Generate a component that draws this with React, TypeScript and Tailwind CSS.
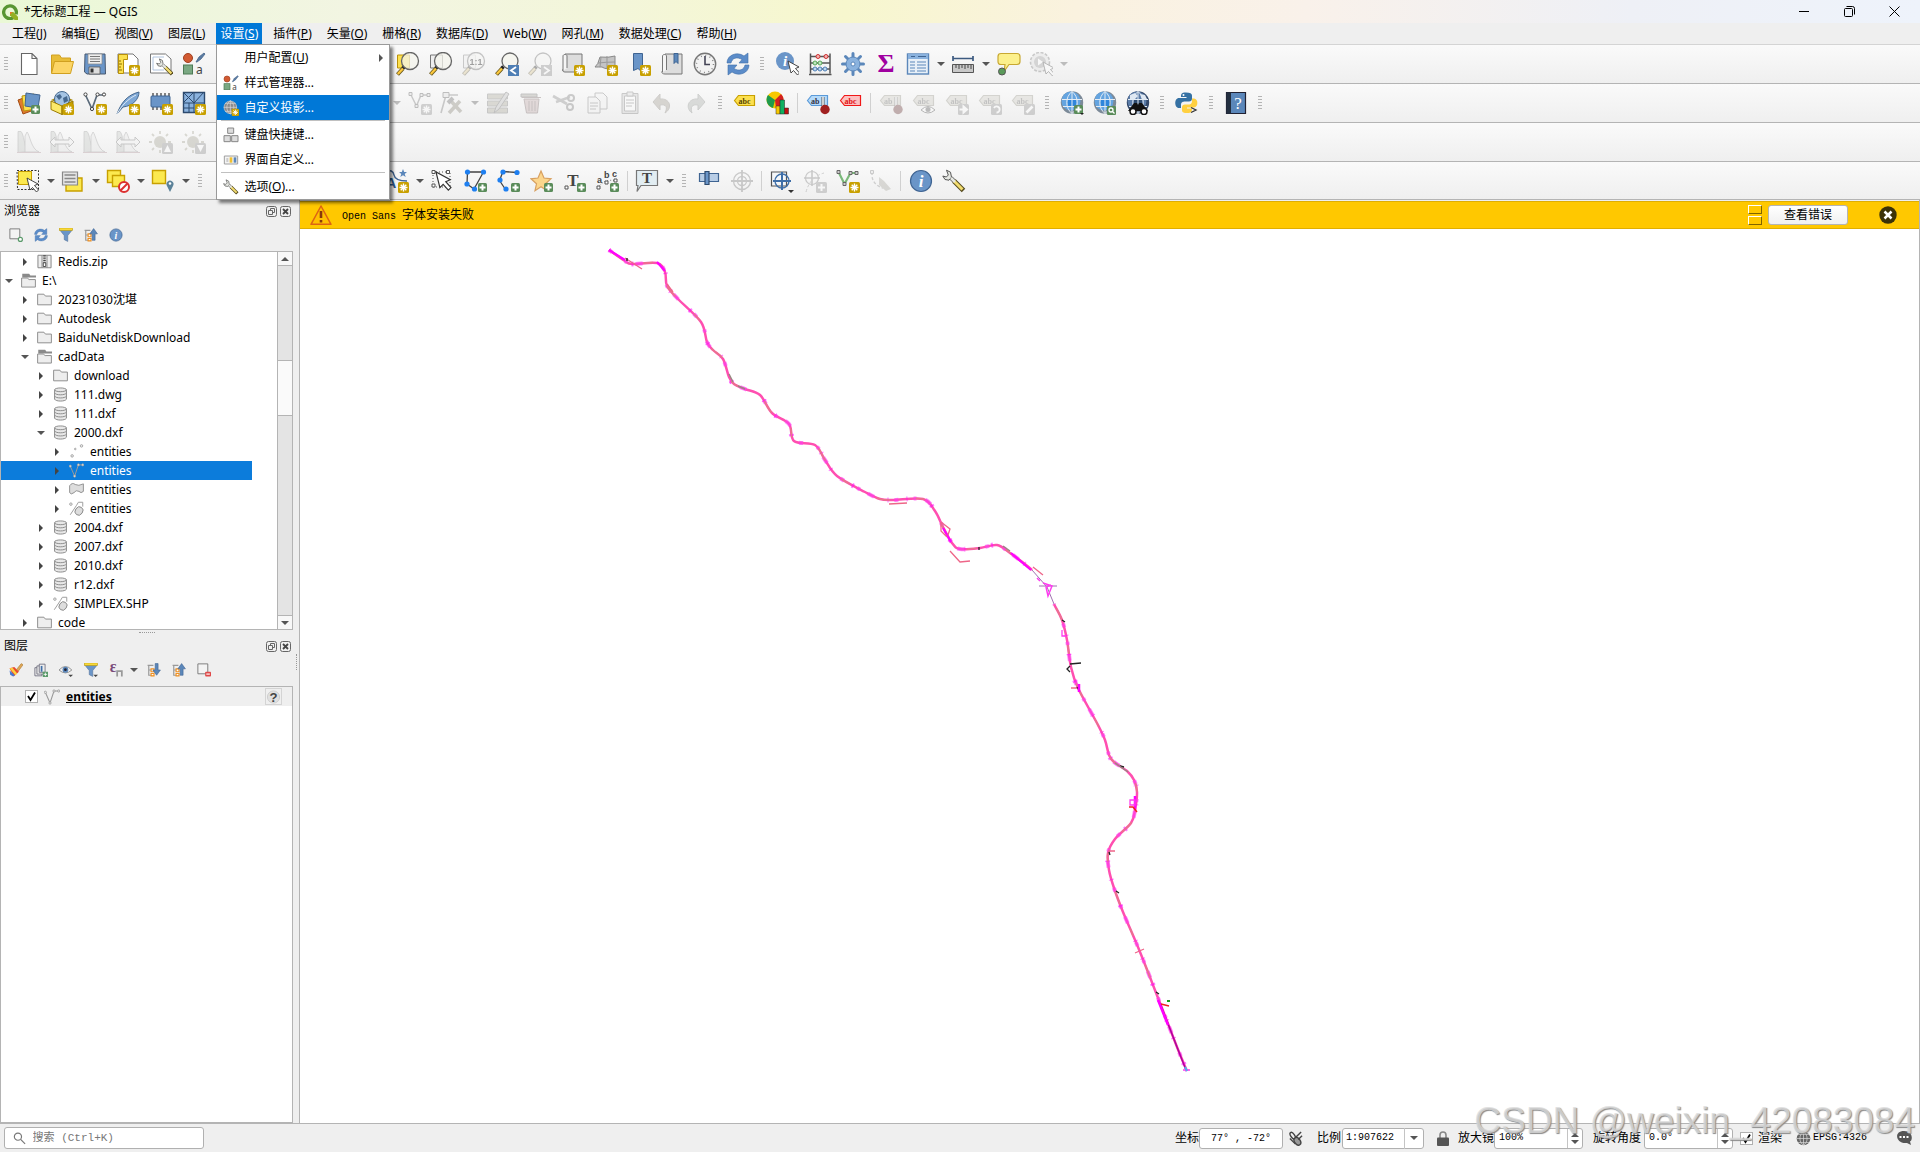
import { ReactNode, useState } from "react";

const PlusBadge = () => (
  <g>
    <rect x="14" y="14" width="9" height="9" rx="1.5" fill="#5a8c5a" />
    <path d="M18.5 15.5v6M15.5 18.5h6" stroke="#fff" strokeWidth="2" />
  </g>
);

const NewBadge = ({ gray = false }: { gray?: boolean }) => (
  <g>
    <rect x="13" y="13" width="11" height="11" rx="1.5" fill={gray ? "#8c8c8c" : "#c8a000"} />
    <path d="M18.5 14.5v8M14.5 18.5h8M15.7 15.7l5.6 5.6M21.3 15.7l-5.6 5.6" stroke="#fff" strokeWidth="1.4" />
  </g>
);

const GrayBadge = ({ children }: { children: ReactNode }) => (
  <g>
    <rect x="13" y="13" width="11" height="11" rx="1.5" fill="#8c8c8c" />
    {children}
  </g>
);

const Lens = ({ cx = 14, cy = 9, r = 8.5 }: { cx?: number; cy?: number; r?: number }) => (
  <g>
    <path d="M8.5 14.5l-2 2" stroke="#222" strokeWidth="3.5" />
    <path d="M7 16.5L1.5 22.5" stroke="#6b5a1e" strokeWidth="4" />
    <path d="M7 16.5L1.8 22" stroke="#fcc83c" strokeWidth="2.2" />
    <circle cx={cx} cy={cy} r={r} fill="#f4f4ec" fillOpacity=".75" stroke="#666" strokeWidth="1.3" />
  </g>
);

const Cursor = ({ x, y }: { x: number; y: number }) => (
  <path transform={`translate(${x} ${y})`} d="M0 0l3 12 2.5-2.5 4 4.5 2-2-4-4.5 3.5-1.5z" fill="#fff" stroke="#333" strokeWidth=".9" />
);

const Tag = ({ fill, stroke, text, label = "abc" }: { fill: string; stroke: string; text: string; label?: string }) => (
  <g>
    <path d="M1.5 9.5l4-5H21.5v10H5.5z" fill={fill} stroke={stroke} strokeWidth="1.2" />
    <text x={label === "ab" ? 5 : 5.5} y="12.5" fontSize="8" fontWeight="700" fontFamily="Liberation Serif, serif" fill={text}>{label}</text>
  </g>
);

const Pin = () => (
  <g>
    <path d="M17 6v9" stroke="#555" strokeWidth="3" />
    <path d="M17 6v9" stroke="#eee" strokeWidth="1.6" />
    <circle cx="19" cy="18.5" r="4.7" fill="#a02020" />
  </g>
);

const Globe = ({ dark = false }: { dark?: boolean }) => (
  <g>
    <circle cx="12" cy="11.5" r="11.2" fill={dark ? "#34496a" : "#7c8a98"} />
    <circle cx="11" cy="10" r="9.5" fill={dark ? "#5b7ca8" : "#64a4e0"} />
    <path d="M8 9h8v6H8z" fill={dark ? "#2d4a6e" : "#2f86dc"} />
    <path d="M12 .5v22M7 8.5h15M2 8.5h5M3 15.5h18M12 .5C5 6 5 17 12 22.5M12 .5c7 5.5 7 16.5 0 22" stroke="#e4ecf4" strokeWidth="1" fill="none" />
    {dark && <path d="M4 4l5-2 3 3-4 4-4-1zM14 3l5 1 2 4-5 1z" fill="#dfe8f2" />}
  </g>
);

const Histogram = ({ arrows = false }: { arrows?: boolean }) => (
  <g>
    <path d="M1 22.5V1.5h3c3 3 3 14 7 20z" fill="#c0c8c0" stroke="#888" strokeWidth=".8" />
    <path d="M8 22V6l2-4c3 3 4 17 12 20z" fill="#e6e6e6" stroke="#888" strokeWidth=".8" />
    <path d="M0 22.5h24" stroke="#cc8899" strokeWidth="1" />
    {arrows && <path d="M0 12l5-5v3h14V7l5 5-5 5v-3H5v3z" fill="#f2f2f2" stroke="#777" strokeWidth="1" />}
  </g>
);

const Sun = ({ up = false }: { up?: boolean }) => (
  <g>
    <circle cx="11" cy="12" r="6" fill="#a5a078" />
    <path d="M11 1v3M11 20v3M0 12h3M19 12h3M3 4l2 2M19 4l-2 2M3 20l2-2" stroke="#a5a078" strokeWidth="1.8" />
    <GrayBadge>
      <path d={up ? "M15 22h7l-3.5-7z" : "M15 15h7l-3.5 7z"} fill="#fff" />
    </GrayBadge>
  </g>
);

const StyleManager = () => (
  <g>
    <circle cx="6" cy="6" r="4.5" fill="#d25a32" stroke="#a04020" />
    <path d="M14 10l3-5 5-4 1 1-4 5-4 3z" fill="#5b7ca3" stroke="#45648a" strokeWidth=".8" />
    <rect x="1.5" y="13" width="9" height="9" fill="#7aa882" stroke="#4c7a55" />
    <text x="14" y="22" fontSize="12" fontFamily="Noto Sans, sans-serif" fill="#444">a</text>
  </g>
);

const Wrench = () => (
  <g>
    <path d="M9 9l4 4" stroke="#666" strokeWidth="4" />
    <path d="M12 12l9.5 9.5" stroke="#554a1e" strokeWidth="5" />
    <path d="M12 12l8.5 8.5" stroke="#f2dc6e" strokeWidth="3" />
    <path d="M4.5 1.2l4 2 1 5-2.5 3-4-.7L.8 7l3.5 1 2-2z" fill="#e6e8e2" stroke="#555" strokeWidth="1" />
    <path d="M9 9l4 4" stroke="#e6e8e2" strokeWidth="2.5" />
  </g>
);

const FilterShape = () => (
  <g>
    <path d="M1 3h22l-8 10v10l-6-3v-7z" fill="#6a95c8" stroke="#56749a" />
    <rect x="1" y="0" width="22" height="4" fill="#f7d93c" stroke="#c8a000" />
  </g>
);

const TreeArrow = ({ down = false }: { down?: boolean }) => (
  <g>
    <path d="M1 4h10M3 4v17h9M3 12h5" stroke="#999" strokeWidth="2" fill="none" />
    <path d="M7 10h5v5H7zM7 18h5v4H7z" fill="#fff" stroke="#f09020" strokeWidth="2" />
    <path d={down ? "M14 1h5v11h4l-6.5 9L10 12h4z" : "M14 21h5V10h4l-6.5-9L10 10h4z"} fill="#5b87ba" stroke="#3f6492" />
  </g>
);

const icons: Record<string, ReactNode> = {
  newProject: <path d="M4.5 1.5h10.5l5 5v16h-15.5zM15 1.5v5h5" fill="#fff" stroke="#666" strokeWidth="1.1" />,
  open: (
    <g stroke="#d0a020" strokeWidth="1">
      <path d="M1.5 21V3h8l2 3h9v4" fill="#e8bd38" />
      <path d="M1.5 21.5l3-12h19l-3 12z" fill="#fcd566" />
    </g>
  ),
  save: (
    <g>
      <path d="M2 2h20l.5 20H4l-2.5-2z" fill="#6a95c8" stroke="#4a5a70" />
      <path d="M5 2h14v10H5z" fill="#eee" stroke="#888" strokeWidth=".7" />
      <path d="M7 4.5h10M7 7h10M7 9.5h10" stroke="#777" />
      <path d="M6 15h11v7H6z" fill="#ddd" stroke="#555" strokeWidth=".8" />
      <path d="M7.5 16.5h3v4h-3z" fill="#333" />
    </g>
  ),
  newLayout: (
    <g>
      <path d="M2 2h15l5 5v14H2z" fill="#fff" stroke="#777" />
      <path d="M2.5 2.5h9v5h-4v14h-5z" fill="#fbe04e" stroke="#b8900a" />
      <path d="M3 9h2M3 12h3M3 15h2M3 18h3" stroke="#8a6d00" />
      <NewBadge />
    </g>
  ),
  layoutManager: (
    <g>
      <path d="M1.5 2h15l5.5 5v14H1.5z" fill="#fff" stroke="#777" />
      <path d="M4 5h11M4 5v13h11" stroke="#b0c4de" fill="none" />
      <g transform="translate(7 6) scale(.75)"><Wrench /></g>
    </g>
  ),
  styleManager: <StyleManager />,
  addSource: (
    <g>
      <path d="M1 9l11-4 5 14-11 4z" fill="#e07a30" stroke="#a04a10" />
      <path d="M5 5l12-2 2 15-12 2z" fill="#fce04e" stroke="#b8900a" />
      <path d="M9 2l14 2-2 13-13-2z" fill="#6a95c8" stroke="#3f6492" />
      <PlusBadge />
    </g>
  ),
  geopackage: (
    <g>
      <path d="M1 9l11-5 11 5-11 5z" fill="#a88a10" />
      <circle cx="12" cy="8" r="7.5" fill="#a5c4e4" stroke="#46688e" />
      <path d="M6 5l4-2 2 3-3 3zM13 7l4-2 1 5-4 2z" fill="#46688e" />
      <path d="M1 10l11 5v8.5L1 18.5z" fill="#fce96a" stroke="#9a7a00" />
      <path d="M23 10l-11 5v8.5l11-5z" fill="#c8a000" stroke="#9a7a00" />
      <NewBadge />
    </g>
  ),
  newShapefile: (
    <g>
      <path d="M2.5 4l6.5 14L14 4h7" fill="none" stroke="#5a6a7a" strokeWidth="1.7" />
      <g fill="#fff" stroke="#444"><circle cx="2.5" cy="3.5" r="1.6" /><circle cx="9" cy="18" r="1.6" /><circle cx="14.5" cy="3.5" r="1.6" /><circle cx="21" cy="3.5" r="1.6" /></g>
      <NewBadge />
    </g>
  ),
  spatialite: (
    <g>
      <path d="M1 23C5 12 11 4 23 1c0 7-6 14-16 15z" fill="#7fa8d6" stroke="#46688e" />
      <path d="M1 23C6 14 12 8 20 4" stroke="#dfeaf5" fill="none" />
      <NewBadge />
    </g>
  ),
  tempLayer: (
    <g>
      <path d="M4 2v17M8 2v17M12 2v17M16 2v17M20 2v17" stroke="#444" strokeWidth="1.3" />
      <rect x="2" y="5" width="19" height="11" rx="1" fill="#6a95c8" stroke="#3f6492" />
      <NewBadge />
    </g>
  ),
  meshLayer: (
    <g>
      <path d="M1.5 1.5h21v20h-21z" fill="#8ab2de" stroke="#2d4a6e" strokeWidth="1.4" />
      <path d="M12 1v21M1 12h21M1 1l11 11M12 1L1 12M22 1L12 12M7 12v10M12 17H1" stroke="#2d4a6e" strokeWidth="1" />
      <NewBadge />
    </g>
  ),
  histogram: <Histogram />,
  histogramStretch: <Histogram arrows />,
  sunUp: <Sun up />,
  sunDown: <Sun />,
  zoomSelection: <g><path d="M1.5 3h12v13h-12z" fill="#fce04e" stroke="#b8900a" /><Lens /></g>,
  zoomLayer: <g><path d="M1.5 3h12v13h-12z" fill="#eee" stroke="#777" /><Lens /></g>,
  zoomNative: (
    <g>
      <path d="M1.5 3h12v13h-12z" fill="#eee" stroke="#777" /><Lens />
      <text x="14" y="12.5" textAnchor="middle" fontSize="9" fontWeight="700" fontFamily="Liberation Sans, sans-serif">1:1</text>
    </g>
  ),
  zoomLast: <g><Lens cx={15} cy={9} r={8} /><rect x="13" y="13" width="11" height="11" fill="#4f7fb5" /><path d="M21 15l-5 3.5 5 3.5" stroke="#fff" strokeWidth="1.8" fill="none" /></g>,
  zoomNext: <g><Lens cx={15} cy={9} r={8} /><rect x="13" y="13" width="11" height="11" fill="#888" /><path d="M16 15l5 3.5-5 3.5" stroke="#fff" strokeWidth="1.8" fill="none" /></g>,
  newMap: <g><path d="M4 2h17v18H4c-3 0-3-3-1-3.5z" fill="#ddd" stroke="#777" /><path d="M2 19V4c0-2 4-2 4 0v12" fill="#f5f5f5" stroke="#777" /><NewBadge /></g>,
  new3d: <g><path d="M1 15q3-2 5-10 8 1 15-1v12q-9 2-13-1-4 0-7 0z" fill="#c4c4c4" stroke="#888" /><path d="M4 11q9-1 17-1M13 4v12M7 5l-1 10" stroke="#999" fill="none" /><NewBadge /></g>,
  newBookmark: <g><path d="M6.5 1.5h9v19l-4.5-4-4.5 2z" fill="#6a95c8" stroke="#3f6492" /><NewBadge /></g>,
  bookmarks: <g><path d="M5 2h17v20H5c-4 0-4-3-1-4z" fill="#ddd" stroke="#777" /><path d="M2.5 20V4c0-2 4-2 4 0v14" fill="#f5f5f5" stroke="#777" /><path d="M14 1.5h4v10l-2-2-2 2z" fill="#5b87ba" stroke="#3f6492" /></g>,
  clock: <g><circle cx="12" cy="12" r="10.7" fill="#f2f2f2" stroke="#777" strokeWidth="1.4" /><circle cx="12" cy="12" r="8.5" fill="none" stroke="#888" strokeDasharray="1 3.45" strokeWidth="1.5" /><path d="M12 4v8.5h5" stroke="#445" strokeWidth="1.6" fill="none" /></g>,
  refresh: (
    <g fill="#5b8cc9" stroke="#3f6ea8" strokeWidth=".6">
      <path d="M1 11C1 3 11-1 18 4l4-3v10h-9l3-3.5C11 4.5 6 6 5 11z" />
      <path d="M23 13c0 8-10 12-17 7l-4 3V13h9l-3 3.5c5 3 10 1.5 11-3.5z" />
    </g>
  ),
  identify: <g><circle cx="10" cy="9" r="9" fill="#6a95c8" /><text x="10" y="14" textAnchor="middle" fontSize="15" fontStyle="italic" fontWeight="700" fontFamily="Liberation Serif, serif" fill="#fff">i</text><Cursor x={13} y={9} /></g>,
  abacus: (
    <g>
      <path d="M2.5 1.5v20M22 1.5v20M1 22.5h22.5M2 4.5h20M2 11h20M2 17h20" stroke="#555" strokeWidth="1.5" fill="none" />
      <g fill="#f6b0b0" stroke="#cc3030"><circle cx="10" cy="4.5" r="2" /><circle cx="18" cy="4.5" r="2" /></g>
      <g fill="#bfe6bf" stroke="#5aa85a"><circle cx="7" cy="11" r="2" /><circle cx="12" cy="11" r="2" /></g>
      <g fill="#bcd6f0" stroke="#4f7fb5"><circle cx="7" cy="17" r="2" /><circle cx="12" cy="17" r="2" /><circle cx="17" cy="17" r="2" /></g>
    </g>
  ),
  gear: (
    <g>
      <path d="M12 1.5v21M1.5 12h21M4.5 4.5l15 15M19.5 4.5l-15 15" stroke="#5b87ba" strokeWidth="3" strokeLinecap="round" />
      <circle cx="12" cy="12" r="7" fill="#8ab2de" stroke="#5b87ba" /><circle cx="12" cy="12" r="2" fill="#fff" stroke="#5b87ba" />
    </g>
  ),
  sigma: <text x="12" y="20" textAnchor="middle" fontSize="26" fontWeight="700" fontFamily="Liberation Serif, serif" fill="#a000a0">Σ</text>,
  table: <g><rect x="1.5" y="2" width="21" height="20" fill="#e8f0f8" stroke="#5b87ba" strokeWidth="1.4" /><path d="M2 2h20v5H2z" fill="#8ab2de" /><path d="M5 4.5h4M12 4.5h8" stroke="#3f6492" /><path d="M4 10h5M11 10h9M4 13h5M11 13h9M4 16h5M11 16h9M4 19h5M11 19h9" stroke="#5b87ba" /></g>,
  measure: <g><path d="M2 6.5h20M2 4v5M22 4v5" stroke="#3c5a80" strokeWidth="1.7" /><path d="M1.5 12.5h21v8h-21z" fill="#c8c8c8" stroke="#555" /><path d="M5 13v3M8 13v4M11 13v3M14 13v4M17 13v3M20 13v4" stroke="#444" /></g>,
  mapTips: <g><path d="M4 1.5h16q3 0 3 3v5q0 3-3 3h-8l-5 7 1-7H4q-3 0-3-3v-5q0-3 3-3z" fill="#fcf08c" stroke="#c8a832" strokeWidth="1.2" /><circle cx="5" cy="19.5" r="3.5" fill="#5a9a5a" stroke="#555" /></g>,
  action: <g><circle cx="11" cy="10" r="9.5" fill="#ddd" stroke="#777" strokeDasharray="3 1.5" strokeWidth="1.6" /><circle cx="11" cy="10" r="6" fill="#999" /><path d="M9 6.5l5 3.5-5 3.5z" fill="#fff" /><Cursor x={14} y={10} /></g>,
  addFeature: <g><path d="M2.5 3l6 12L13 4h8" fill="none" stroke="#777" strokeWidth="1.5" /><g fill="#ddd" stroke="#555"><path d="M1 1.5h3v3H1zM7 13.5h3v3H7zM12 2.5h3v3h-3zM19 2.5h3v3h-3z" /></g><NewBadge gray /></g>,
  vertexTool: <g><path d="M1 22L6 4h12" fill="none" stroke="#777" strokeWidth="1.6" /><path d="M3 1.5h6v5H3z" fill="#ddd" stroke="#555" /><path d="M20 10L9 22M10 9l11 12" stroke="#8a8460" strokeWidth="3.5" /><path d="M8 12l5-5" stroke="#666" strokeWidth="4" /></g>,
  modify: <g><path d="M1.5 3h20v5h-20zM1.5 10h20v5h-20zM1.5 17h20v5h-20z" fill="#b0a880" stroke="#777" /><path d="M8 22l2-6L20 1l3 2-10 15z" fill="#bbb" stroke="#666" /></g>,
  trash: <g><path d="M2 3h16v3H2z" fill="#aaa08c" stroke="#666" /><path d="M5 8h15l-1.5 14h-11z" fill="#d8a0a0" stroke="#8a6060" /><path d="M10 10v10M13 10v10M16 10v10M3 6.5h19" stroke="#8a6060" /></g>,
  cut: <g><path d="M1 5l14 8M4 11l14-5" stroke="#888" strokeWidth="2.6" /><circle cx="19" cy="7" r="3" fill="none" stroke="#777" strokeWidth="2" /><circle cx="18" cy="16" r="3" fill="none" stroke="#777" strokeWidth="2" /></g>,
  copy: <g fill="#f2f2f2" stroke="#777"><path d="M10 2h8l4 4v12H10z" /><path d="M3 6h8l4 4v12H3z" /><path d="M5 12h8M5 15h8M5 18h6" /></g>,
  paste: <g stroke="#777"><path d="M4 2.5h16v20H4z" fill="#ccc" /><path d="M6.5 5h11v15h-11z" fill="#fff" /><path d="M9 1h6v4H9z" fill="#ddd" /><path d="M8 9h8M8 12h8M8 15h6" /></g>,
  undo: <path d="M9 3v5c10-1 13 9 5 14 3-6 1-9-5-8v5L2 11z" fill="#a8987c" stroke="#8a8070" />,
  redo: <path d="M14 3v5C4 7 1 17 8 22c-2-6 0-9 6-8v5l7-8z" fill="#a4aca4" stroke="#808a80" />,
  tagYellow: <Tag fill="#fce04e" stroke="#c8a000" text="#554400" />,
  diagram: (
    <g>
      <circle cx="9" cy="9" r="8.5" fill="#f7c800" />
      <path d="M9 9L2 4a8.5 8.5 0 0 0 5 13z" fill="#1f9a4c" /><path d="M9 9l6-6a8.5 8.5 0 0 1-5 14.5z" fill="#d42020" />
      <path d="M10 15h4v8h-4z" fill="#f7c800" stroke="#333" strokeWidth=".5" /><path d="M14 9h4.5v14H14z" fill="#10b060" stroke="#222" strokeWidth=".5" /><path d="M18.5 17h4v6h-4z" fill="#c01010" stroke="#222" strokeWidth=".5" />
    </g>
  ),
  tagPin: <g><Tag fill="#b4dafa" stroke="#5b9ad8" text="#334" label="ab" /><Pin /></g>,
  tagRed: <Tag fill="#fcc0c0" stroke="#f01818" text="#e01010" />,
  tagPinGray: <g><Tag fill="#cfcbb0" stroke="#999478" text="#666" label="ab" /><Pin /></g>,
  tagEye: <g><Tag fill="#cfcbb0" stroke="#999478" text="#666" /><path d="M9 19q7-7 14 0-7 6-14 0z" fill="#fff" stroke="#444" /><circle cx="16" cy="18.5" r="2.5" fill="#555" /></g>,
  tagMove: <g><Tag fill="#cfcbb0" stroke="#999478" text="#666" /><GrayBadge><path d="M14.5 18.5h4M18.5 15.5l3.5 3-3.5 3z" stroke="#fff" strokeWidth="2" fill="#fff" /></GrayBadge></g>,
  tagRotate: <g><Tag fill="#cfcbb0" stroke="#999478" text="#666" /><GrayBadge><path d="M16 17a3 3 0 1 1 2.5 4.5" stroke="#fff" strokeWidth="1.8" fill="none" /></GrayBadge></g>,
  tagEdit: <g><Tag fill="#cfcbb0" stroke="#999478" text="#666" /><GrayBadge><path d="M15.5 21.5l6-6" stroke="#fff" strokeWidth="2.6" /></GrayBadge></g>,
  globeAdd: <g><Globe /><PlusBadge /><path d="M20 22h4l-2 2z" fill="#222" /></g>,
  globeSearch: <g><Globe /><rect x="14" y="15" width="9" height="9" rx="1" fill="#5a8c5a" /><circle cx="18" cy="19" r="2" fill="none" stroke="#fff" strokeWidth="1.3" /><path d="M19.5 20.5l2 2" stroke="#fff" strokeWidth="1.3" /></g>,
  globeFind: <g><Globe dark /><path d="M8 12h3l1 2 1-2h3l6 8H2z" fill="#111" /><circle cx="7" cy="20.5" r="3" fill="#fff" stroke="#111" strokeWidth="1.5" /><circle cx="18" cy="20.5" r="3" fill="#fff" stroke="#111" strokeWidth="1.5" /></g>,
  python: (
    <g>
      <path d="M11 1.5c-5 0-5 2-5 4.5h5.5v1H4c-5 0-5 10 0 10h2v-3c0-3 2-3.5 4-3.5h4c2 0 3-1 3-3V4.5c0-2-2-3-6-3z" fill="#3571a3" />
      <path d="M12 22c5 0 5-2 5-4.5h-5v-1h7c4.5 0 4.5-9 0-9h-2v2.5c0 3-2 3.5-4 3.5h-3c-2 0-3 1-3 3v3c0 2 2 2.5 5 2.5z" fill="#ffd040" />
      <circle cx="8.5" cy="4" r="1" fill="#fff" /><path d="M16 16.5l5 2.5-5 2.5" stroke="#333" strokeWidth="1.3" fill="none" />
    </g>
  ),
  help: <g><path d="M2.5 1.5h19v21h-19z" fill="#5b87ba" stroke="#223" strokeWidth="1.2" /><path d="M2.5 1.5h4.5v21H2.5z" fill="#232f40" /><text x="14" y="18" textAnchor="middle" fontSize="17" fontFamily="Liberation Serif, serif" fill="#fff">?</text></g>,
  select: <g><path d="M2.5 2.5h13v13h-13z" fill="#fce94f" stroke="#c8a000" /><path d="M1 1.5h21.5v19H1.5z" fill="none" stroke="#333" strokeDasharray="2 1.5" /><Cursor x={11} y={9} /></g>,
  selectValue: <g><path d="M5 9h16v13H5z" fill="#fce94f" stroke="#c8a000" strokeWidth="1.4" /><path d="M1.5 3h15v13h-15z" fill="#e4e4e4" stroke="#888" strokeWidth="1.2" /><path d="M3.5 6h11M3.5 9.5h11M3.5 13h11" stroke="#888" strokeWidth="1.5" /></g>,
  deselect: <g><path d="M1.5 1.5h13v12h-13z" fill="#fce94f" stroke="#c8a000" strokeWidth="1.4" /><path d="M6.5 6.5h12v11h-12z" fill="#fce94f" stroke="#c8a000" strokeWidth="1.4" /><circle cx="18" cy="18" r="5" fill="#fff" stroke="#dc3030" strokeWidth="2" /><path d="M14.5 21.5l7-7" stroke="#dc3030" strokeWidth="2" /></g>,
  selectLocation: <g><path d="M1.5 1.5h13v13h-13z" fill="#fce94f" stroke="#c8a000" strokeWidth="1.4" /><path d="M19 23l-3-6a3.5 3.5 0 1 1 6 0z" fill="#5b8299" /><circle cx="19" cy="14.5" r="1.3" fill="#fff" /></g>,
  textLine: <g><path d="M0 2q8-2 9 4t13 6" stroke="#3f6492" fill="none" strokeWidth="1.5" /><text x="6" y="19" textAnchor="middle" fontSize="15" fontWeight="700" fontFamily="Liberation Sans, sans-serif" fill="#2d5a8e">A</text><path d="M18 0l1.2 3H22l-2.3 2 1 3-2.7-1.8L15.3 8l1-3L14 3h2.8z" fill="#5b87ba" /><NewBadge /></g>,
  annotSelect: <g><path d="M2 3h17M2 3v15h17V3" fill="none" stroke="#555" strokeDasharray="1 2" /><path d="M1 1.5h3v3H1zM15.5 1.5h3v3h-3zM1 15h3v3H1z" fill="#fff" stroke="#555" /><g transform="translate(5 3) scale(1.3)"><Cursor x={0} y={0} /></g></g>,
  annotPolygon: <g><path d="M3.5 3h16L10 20l-7-5z" fill="none" stroke="#444" strokeWidth="1.3" /><g fill="#1e7ff0"><circle cx="3.5" cy="3" r="2.6" /><circle cx="19.5" cy="3" r="2.6" /><circle cx="3" cy="15" r="2.6" /><circle cx="10.5" cy="20" r="2.6" /></g><PlusBadge /></g>,
  annotLine: <g><path d="M20 3.5L6 2.5l-3.5 9 6 9" fill="none" stroke="#444" strokeWidth="1.3" /><g fill="#1e7ff0"><circle cx="6" cy="3" r="2.6" /><circle cx="20" cy="3.5" r="2.6" /><circle cx="3" cy="11" r="2.6" /><circle cx="9" cy="20" r="2.6" /></g><PlusBadge /></g>,
  annotMarker: <g><path d="M11 2l3 7 7 .8-5.5 5 1.5 7-6-4-6 4 1.5-7L1 9.8 8 9z" fill="#fcd68c" stroke="#d8a060" strokeWidth="1.2" /><PlusBadge /></g>,
  annotText: <g><text x="10" y="17" textAnchor="middle" fontSize="17" fontWeight="700" fontFamily="Liberation Serif, serif" fill="#444">T</text><path d="M2 17h3v3H2z" fill="#fff" stroke="#555" /><PlusBadge /></g>,
  annotTextLine: (
    <g>
      <g fontSize="9" fontWeight="700" fontFamily="Liberation Sans, sans-serif" fill="#444"><text x="1" y="14">a</text><text x="8" y="9">b</text><text x="16" y="8">c</text></g>
      <path d="M2 19Q8 9 20 12" stroke="#666" strokeDasharray="1 2" fill="none" /><path d="M1 17h3v3H1zM9 12h3v3H9zM18 10h3v3h-3z" fill="#fff" stroke="#555" /><PlusBadge />
    </g>
  ),
  textBox: <g><path d="M1.5 1.5h21v15H6l-4 6 1-6H1.5z" fill="#e2edf2" stroke="#777" strokeWidth="1.2" /><text x="12" y="14" textAnchor="middle" fontSize="15" fontWeight="700" fontFamily="Liberation Serif, serif" fill="#444">T</text></g>,
  snap: <g><path d="M2.5 4.5h19v8h-19z" fill="#b8cde6" stroke="#3f6492" strokeWidth="1.2" /><path d="M8 2.5h4v13H8z" fill="#6a95c8" stroke="#2d4a6e" strokeWidth="1.2" /></g>,
  target: <g fill="none" stroke="#777" strokeWidth="1.3"><circle cx="12" cy="12" r="8.5" /><circle cx="12" cy="12" r="4.5" /><path d="M12 1v22M1 12h22" strokeWidth="1.8" /></g>,
  targetBox: <g><path d="M1.5 3h15v14h-15z" fill="#f4f6f8" stroke="#555" strokeWidth="1.2" /><circle cx="12" cy="12" r="7" fill="none" stroke="#3f6fa8" strokeWidth="1.3" /><path d="M12 3v18M3 12h18" stroke="#3f6fa8" strokeWidth="2" /><path d="M18 21h6l-3 3z" fill="#333" /></g>,
  targetAdd: <g><g fill="none" stroke="#777" strokeWidth="1.2"><circle cx="9" cy="9" r="6.5" /><path d="M9 1v16M1 9h16" strokeWidth="1.6" /></g><path d="M3 23Q7 8 21 4" stroke="#888" fill="none" strokeDasharray="3 2" /><GrayBadge><path d="M18.5 15v7M15 18.5h7" stroke="#fff" strokeWidth="2" /></GrayBadge></g>,
  vectorNew: <g><path d="M2.5 3l6 12 6-11h7" fill="none" stroke="#7ab87a" strokeWidth="2.2" /><g fill="#ccc" stroke="#666"><path d="M1 1.5h3v3H1zM7 13.5h3v3H7zM13 2.5h3v3h-3zM19 2.5h3v3h-3z" /></g><NewBadge /></g>,
  traceOff: <g><path d="M3 3v4q1 9 11 12" stroke="#888" strokeWidth="1.4" strokeDasharray="3 2" fill="none" /><path d="M1.5 1.5h3v3h-3z" fill="#ddd" stroke="#777" /><path d="M10 8l5 4 7 8-5 2-7-6z" fill="#a8a48c" /></g>,
  info: (
    <g>
      <circle cx="12" cy="12" r="10.5" fill="#6a95c8" stroke="#3f6492" strokeWidth="1.2" />
      <text x="12" y="18" textAnchor="middle" fontSize="17" fontStyle="italic" fontWeight="700" fontFamily="Liberation Serif, serif" fill="#fff">i</text>
    </g>
  ),
  wrench: <Wrench />,
  filter: <FilterShape />,
  addLayerSmall: <g><path d="M1.5 1.5h17v17h-17z" fill="#f4f4f4" stroke="#777" strokeWidth="1.6" /><circle cx="19.5" cy="19.5" r="3.5" fill="#fff" stroke="#5a9a6a" strokeWidth="2" /></g>,
  removeLayer: <g><path d="M1.5 1.5h17v17h-17z" fill="#f4f4f4" stroke="#777" strokeWidth="1.6" /><rect x="14" y="15" width="10" height="8" rx="1.5" fill="#e04848" /><path d="M16 19h6" stroke="#fff" strokeWidth="2" /></g>,
  collapse: <TreeArrow />,
  expand: <TreeArrow down />,
  brush: <g><path d="M13 11l8-10 3 2-8 11z" fill="#e0a858" stroke="#a87830" /><path d="M1 9l8-2 8 8-9 8z" fill="#e84830" /><path d="M1 9l5-1 8 10-3 3z" fill="#fcd040" /><path d="M1 13l9 8-3 2-5-3z" fill="#4878d0" /></g>,
  groupAdd: <g fill="#eee" stroke="#667" strokeWidth="1.4"><path d="M1.5 8h12v14h-12z" /><path d="M5 5h12v14H5z" /><path d="M9 2h10v14H9z" /><path d="M13 5v10" stroke="#3f6fa8" strokeWidth="3" /><rect x="15" y="15" width="9" height="9" fill="#5a9a6a" stroke="none" /><path d="M19.5 16.5v6M16.5 19.5h6" stroke="#fff" /></g>,
  eye: <g><path d="M0 12Q11 0 22 12 11 22 0 12z" fill="#f4f4f4" stroke="#888" strokeWidth="1.5" /><circle cx="11" cy="11.5" r="5" fill="#5b87ba" /><circle cx="11" cy="11.5" r="2.3" fill="#223" /><path d="M16 20h8l-4 4z" fill="#444" /></g>,
  filterMenu: <g><FilterShape /><path d="M16 20h8l-4 4z" fill="#444" /></g>,
  epsilon: <g><text x="7" y="15" textAnchor="middle" fontSize="27" fontWeight="700" fontFamily="Liberation Serif, serif" fill="#7a4a7a">ε</text><path d="M14 23v-9h8v9" stroke="#999" strokeWidth="3" fill="none" /></g>,
  globeNew: <g><circle cx="11" cy="11" r="9.5" fill="#8a8a8a" stroke="#ccc" /><path d="M11 1v20M1 11h20M3 5h16M3 17h16M11 1C4 6 4 16 11 21M11 1c7 5 7 15 0 20" stroke="#ddd" fill="none" /><NewBadge /></g>,
  keys: <g fill="#ddd" stroke="#888" strokeWidth="1.5"><path d="M7 1.5h9v8H7zM1.5 13h9.5v9H1.5zM13 13h9.5v9H13z" /></g>,
  customize: <g><path d="M2 6h20v12H2z" fill="#f4f4f4" stroke="#999" strokeWidth="1.4" /><path d="M5 9h3v6H5z" fill="#ccc" /><path d="M10 8h4v8h-4z" fill="#f0c030" /><path d="M16 8h4v8h-4z" fill="#5b87ba" /></g>,
  zip: <g><path d="M1.5 2h21v20h-21z" fill="#eee" stroke="#888" strokeWidth="1.6" /><path d="M8 2v20M16 2v20" stroke="#888" strokeWidth="1.5" /><path d="M12 2v12" stroke="#444" strokeWidth="4" strokeDasharray="2 1.5" /><path d="M10 14h4v6h-4z" fill="#fff" stroke="#444" strokeWidth="1.5" /></g>,
  folder: <path d="M1 20.5V3.5h10l2.5 3H23v14z" fill="#eee" stroke="#8a8a8a" strokeWidth="1.5" />,
  folderOpen: <g><path d="M2 1h11l2 3h9v3H2z" fill="#8a8a8a" /><path d="M1 22.5V8h9l3 2.5h10v12z" fill="#eee" stroke="#8a8a8a" strokeWidth="1.5" /></g>,
  database: <g fill="#e8e8e8" stroke="#888" strokeWidth="1.5"><path d="M2.5 4.5v15c2 4 17 4 19 0v-15" /><ellipse cx="12" cy="4.5" rx="9.5" ry="3" /><path d="M2.5 9.5c2 4 17 4 19 0M2.5 14.5c2 4 17 4 19 0" fill="none" /></g>,
  points: <g fill="#eee" stroke="#999" strokeWidth="1.3"><circle cx="5" cy="19" r="2" /><circle cx="20" cy="3" r="2" /><circle cx="10" cy="8" r="1.3" /></g>,
  lines: <g><path d="M2 5l7 16 6-18h8" fill="none" stroke="#999" strokeWidth="1.6" /><g fill="#eee" stroke="#999" strokeWidth="1.2"><circle cx="2" cy="5" r="1.7" /><circle cx="9" cy="21" r="1.7" /><circle cx="15" cy="3" r="1.7" /><circle cx="22" cy="3" r="1.7" /></g></g>,
  polygon: <path d="M1 6q4-6 9-2 5 3 13-1v12q-4 4-7 0-5-3-8 2-5 4-7 0z" fill="#ddd" stroke="#888" strokeWidth="1.4" />,
  mixed: <g><path d="M2 22L12 7l3-5h7v7" stroke="#999" fill="none" strokeWidth="1.5" /><circle cx="3" cy="5" r="2" fill="#eee" stroke="#999" strokeWidth="1.3" /><ellipse cx="16" cy="16" rx="6" ry="7" transform="rotate(35 16 16)" fill="#ddd" stroke="#888" strokeWidth="1.4" /></g>,
};

function Icon({ name, className = "size-6" }: { name: string; className?: string }) {
  return (
    <svg viewBox="0 0 24 24" className={`${className} shrink-0`} aria-hidden="true">
      {icons[name]}
    </svg>
  );
}

function Caret({ className = "" }: { className?: string }) {
  return <span className={`h-0 w-0 border-x-4 border-t-4 border-x-transparent border-t-[#555] ${className}`} />;
}

type Tool = { icon: string; label: string; menu?: boolean; off?: boolean };

function ToolButton({ icon, label, menu, off }: Tool) {
  return (
    <button
      aria-label={label}
      className={`flex h-8 items-center ${menu ? "w-[45px] pl-1" : "w-[33px] justify-center"} ${off ? "opacity-35 grayscale-[60%]" : ""}`}
    >
      <Icon name={icon} />
      {menu && <Caret className="ml-[7px]" />}
    </button>
  );
}

const Tools = ({ items }: { items: Tool[] }) => items.map((item) => <ToolButton key={item.label} {...item} />);

function Handle({ className = "w-4" }: { className?: string }) {
  return (
    <span className={`flex h-4 justify-center ${className}`}>
      <span className="w-1 bg-[radial-gradient(circle,#b4b4b4_1px,transparent_1px)] bg-[length:2px_3px]" />
    </span>
  );
}

const Separator = () => <span className="mx-[3px] h-5 w-px bg-[#d0d0d0]" />;

function Toolbar({ label, children, className = "h-[39px]" }: { label: string; children: ReactNode; className?: string }) {
  return (
    <div role="toolbar" aria-label={label} className={`flex items-center border-b border-[#b4b4b4] bg-linear-to-b from-[#fafafa] to-[#efefef] ${className}`}>
      <Handle className="w-3" />
      {children}
    </div>
  );
}

const menus = [
  ["工程", "J"], ["编辑", "E"], ["视图", "V"], ["图层", "L"], ["设置", "S"], ["插件", "P"], ["矢量", "O"],
  ["栅格", "R"], ["数据库", "D"], ["Web", "W"], ["网孔", "M"], ["数据处理", "C"], ["帮助", "H"],
];

function MenuRow({ icon, children, active, more }: { icon?: string; children: ReactNode; active?: boolean; more?: boolean }) {
  return (
    <button role="menuitem" className={`flex h-[25px] w-full items-center pl-[6px] text-left ${active ? "bg-[#0078d7] text-white" : ""}`}>
      <span className="w-[21px]">{icon && <Icon name={icon} className="size-4" />}</span>
      {children}
      {more && <span className="mr-[6px] ml-auto h-0 w-0 border-y-4 border-l-4 border-y-transparent border-l-[#555]" />}
    </button>
  );
}

function SettingsMenu() {
  return (
    <div role="menu" className="absolute top-full left-0 z-20 w-[174px] border border-[#9a9a9a] bg-white shadow-[3px_3px_3px_rgba(0,0,0,0.5)]">
      <MenuRow more>用户配置(<u>U</u>)</MenuRow>
      <MenuRow icon="styleManager">样式管理器...</MenuRow>
      <MenuRow icon="globeNew" active>自定义投影...</MenuRow>
      <hr className="mx-1 mb-px border-[#c0c0c0]" />
      <MenuRow icon="keys">键盘快捷键...</MenuRow>
      <MenuRow icon="customize">界面自定义...</MenuRow>
      <hr className="mx-1 mb-px border-[#c0c0c0]" />
      <MenuRow icon="wrench">选项(<u>O</u>)...</MenuRow>
    </div>
  );
}

function TitleBar() {
  return (
    <header className="flex h-[23px] items-center bg-[linear-gradient(90deg,#eaf8d6_0%,#f2f5e2_18%,#f3f6da_32%,#f7f7ce_44%,#faf2df_56%,#f9f1ea_68%,#eef0f6_85%,#eef3fb_100%)] pl-[2px] text-xs">
      <svg viewBox="0 0 24 24" className="mr-[6px] size-4">
        <path d="M17 20.5a9.500 9.500 0 1 1 4-5" fill="none" stroke="#589632" strokeWidth="5" />
        <path d="M12 12h5l7 7v5h-5l-7-7z" fill="#93b023" />
        <path d="M12 12h4l-4 4z" fill="#e8762c" />
      </svg>
      <h1>*无标题工程 — QGIS</h1>
      <div className="mr-1 ml-auto flex items-center text-black">
        <button aria-label="最小化" className="flex w-[46px] justify-center"><span className="h-px w-[10px] bg-black" /></button>
        <button aria-label="还原" className="flex w-[45px] justify-center">
          <svg viewBox="0 0 11 11" className="size-[11px]" fill="none" stroke="#000"><rect x=".5" y="2.5" width="8" height="8" rx="1" /><path d="M2.5 .5h6q2 0 2 2v6" /></svg>
        </button>
        <button aria-label="关闭" className="flex w-11 justify-center">
          <svg viewBox="0 0 11 11" className="size-[11px]" stroke="#000"><path d="M.5 .5l10 10M10.5 .5l-10 10" /></svg>
        </button>
      </div>
    </header>
  );
}

function DockHeader({ title }: { title: string }) {
  return (
    <div className="flex h-[22px] items-center gap-[3px] pr-[2px] pl-1">
      <h2 className="mr-auto">{title}</h2>
      <button aria-label={`浮动${title}`}>
        <svg viewBox="0 0 11 11" className="size-[11px]" fill="none" stroke="#666"><rect x=".5" y=".5" width="10" height="10" rx="2" /><path d="M2.5 4.5h4v4h-4zM4.5 4.5v-2h4v4h-2" /></svg>
      </button>
      <button aria-label={`关闭${title}`}>
        <svg viewBox="0 0 11 11" className="size-[11px]" fill="none" stroke="#666"><rect x=".5" y=".5" width="10" height="10" rx="2" /><path d="M3 3l5 5M8 3l-5 5" stroke="#444" strokeWidth="1.8" /></svg>
      </button>
    </div>
  );
}

type Node = { label: string; depth: number; icon: string; open?: boolean };

const nodes: Node[] = [
  { label: "Redis.zip", depth: 1, icon: "zip" },
  { label: "E:\\", depth: 0, icon: "folderOpen", open: true },
  { label: "20231030沈堪", depth: 1, icon: "folder" },
  { label: "Autodesk", depth: 1, icon: "folder" },
  { label: "BaiduNetdiskDownload", depth: 1, icon: "folder" },
  { label: "cadData", depth: 1, icon: "folderOpen", open: true },
  { label: "download", depth: 2, icon: "folder" },
  { label: "111.dwg", depth: 2, icon: "database" },
  { label: "111.dxf", depth: 2, icon: "database" },
  { label: "2000.dxf", depth: 2, icon: "database", open: true },
  { label: "entities", depth: 3, icon: "points" },
  { label: "entities", depth: 3, icon: "lines" },
  { label: "entities", depth: 3, icon: "polygon" },
  { label: "entities", depth: 3, icon: "mixed" },
  { label: "2004.dxf", depth: 2, icon: "database" },
  { label: "2007.dxf", depth: 2, icon: "database" },
  { label: "2010.dxf", depth: 2, icon: "database" },
  { label: "r12.dxf", depth: 2, icon: "database" },
  { label: "SIMPLEX.SHP", depth: 2, icon: "mixed" },
  { label: "code", depth: 1, icon: "folder" },
];

const indents = ["pl-1", "pl-5", "pl-9", "pl-[52px]"];

function BrowserPanel() {
  const [selected, setSelected] = useState(11);
  return (
    <section>
      <DockHeader title="浏览器" />
      <div className="flex h-[29px] items-center gap-[11px] pb-[3px] pl-[9px]">
        {[["addLayerSmall", "添加图层"], ["refresh", "刷新"], ["filter", "筛选浏览器"], ["collapse", "全部折叠"], ["info", "属性"]].map(([icon, label]) => (
          <button key={icon} aria-label={label}><Icon name={icon} className="size-[14px]" /></button>
        ))}
      </div>
      <div className="flex h-[379px] border border-[#b4b4b4] bg-white">
        <ul role="tree" aria-label="浏览器" className="flex-1 overflow-hidden pr-[25px]">
          {nodes.map((node, i) => (
            <li key={i} role="treeitem" aria-selected={i === selected}>
              <button
                onClick={() => setSelected(i)}
                className={`flex h-[19px] w-full items-center ${indents[node.depth]} ${i === selected ? "bg-[#0c7cdb] text-white" : ""}`}
              >
                <span className="flex w-4 shrink-0">
                  {node.open ? <Caret /> : <span className="ml-[2px] h-0 w-0 border-y-4 border-l-4 border-y-transparent border-l-[#444]" />}
                </span>
                <Icon name={node.icon} className="size-[15px]" />
                <span className="ml-[6px] whitespace-nowrap">{node.label}</span>
              </button>
            </li>
          ))}
        </ul>
        <div className="flex w-[15px] flex-col border-l border-[#b4b4b4] bg-[#e4e4e4]">
          <button aria-label="向上滚动" className="flex h-[14px] items-center justify-center border-b border-[#b4b4b4] bg-[#f8f8f8]"><Caret className="rotate-180" /></button>
          <div className="mt-[94px] h-14 border-y border-[#b4b4b4] bg-[#fafafa]" />
          <button aria-label="向下滚动" className="mt-auto flex h-[14px] items-center justify-center border-t border-[#b4b4b4] bg-[#f8f8f8]"><Caret /></button>
        </div>
      </div>
    </section>
  );
}

function CheckBox({ id }: { id: string }) {
  return (
    <span className="relative flex size-[13px]">
      <input id={id} type="checkbox" defaultChecked className="peer size-[13px] appearance-none border border-[#b0b0b0] bg-white" />
      <svg viewBox="0 0 13 13" className="pointer-events-none absolute inset-0 hidden peer-checked:block"><path d="M3 6l2.5 4L10 2.5" fill="none" stroke="#000" strokeWidth="1.8" /></svg>
    </span>
  );
}

function LayersPanel() {
  return (
    <section className="flex flex-1 flex-col">
      <DockHeader title="图层" />
      <div className="flex h-[29px] items-center gap-[11px] pb-[3px] pl-[9px]">
        {[["brush", "图层样式"], ["groupAdd", "添加组"], ["eye", "管理地图主题"], ["filterMenu", "筛选图例"], ["epsilon", "表达式筛选"]].map(([icon, label]) => (
          <button key={icon} aria-label={label}><Icon name={icon} className="size-[14px]" /></button>
        ))}
        <Caret className="-mr-[2px] -ml-1" />
        {[["expand", "全部展开"], ["collapse", "全部折叠"], ["removeLayer", "移除图层"]].map(([icon, label]) => (
          <button key={icon} aria-label={label}><Icon name={icon} className="size-[14px]" /></button>
        ))}
      </div>
      <div className="flex-1 border border-[#b4b4b4] bg-white">
        <div className="flex h-[19px] items-center bg-[#efefef] pr-[10px] pl-6">
          <CheckBox id="layer-entities" />
          <Icon name="lines" className="mx-[6px] size-4" />
          <label htmlFor="layer-entities" className="font-bold underline">entities</label>
          <button aria-label="图层没有坐标参考系" className="ml-auto flex size-[17px] items-center justify-center border border-[#d4d4d4]">
            <svg viewBox="0 0 16 16" className="size-4">
              <circle cx="8" cy="8" r="6.5" fill="#e0e0e0" stroke="#ccc" />
              <text x="8" y="13" textAnchor="middle" fontSize="14" fontWeight="700" fontFamily="Liberation Sans, sans-serif" fill="#444">?</text>
            </svg>
          </button>
        </div>
      </div>
    </section>
  );
}

const route: [number, number][] = [
  [609, 250], [625, 261], [632, 264], [657, 263], [665, 272], [667, 286], [678, 299], [701, 322], [707, 342], [713, 350],
  [723, 359], [729, 377], [734, 384], [745, 389], [760, 395], [772, 413], [789, 424], [794, 441], [815, 445], [825, 460],
  [837, 476], [865, 492], [880, 499], [893, 500], [923, 499], [935, 511], [943, 527], [952, 543], [960, 549], [980, 548],
  [997, 545], [1010, 553], [1032, 570], [1047, 587], [1054, 604], [1062, 620], [1067, 640], [1071, 667], [1078, 688],
  [1098, 725], [1105, 740], [1109, 755], [1114, 762], [1127, 771], [1134, 780], [1137, 792], [1135, 810], [1131, 823],
  [1115, 839], [1108, 853], [1109, 870], [1114, 888], [1123, 912], [1140, 952], [1160, 1003], [1177, 1047], [1187, 1071],
];

function smooth(points: [number, number][]) {
  return points.slice(1).reduce((d, p, i) => {
    const p0 = points[Math.max(0, i - 1)];
    const p1 = points[i];
    const p3 = points[Math.min(points.length - 1, i + 2)];
    return `${d}C${p1[0] + (p[0] - p0[0]) / 6} ${p1[1] + (p[1] - p0[1]) / 6} ${p[0] - (p3[0] - p1[0]) / 6} ${p[1] - (p3[1] - p1[1]) / 6} ${p[0]} ${p[1]}`;
  }, `M${points[0][0]} ${points[0][1]}`);
}

function MapCanvas() {
  const d = smooth(route);
  return (
    <div className="relative flex-1 overflow-hidden bg-white">
      <svg className="absolute inset-0 size-full" role="img" aria-label="entities">
        <g transform="translate(-300 -229)" fill="none">
          <path d={d} stroke="#ff4fb0" strokeWidth="2.5" />
          <path d={d} stroke="#ff3cf0" strokeWidth="4" strokeDasharray="4 15 3 9 7 21" strokeOpacity=".6" />
          <path d={d} stroke="#f0f" strokeWidth="5" strokeDasharray="1 26 2 37 1 18" strokeOpacity=".5" />
          <path d={d} stroke="#e87888" strokeWidth="1.5" strokeDasharray="14 25 9 31" />
          <path d="M1032 570l15 17 7 17" stroke="#fff" strokeWidth="6" />
          <path d="M1032 570l15 17 7 17M1039 586h18" stroke="#a070b0" />
          <path d="M1037 578l3 3M1043 583l9 3-4 10-2-9 5-2" stroke="#ff3cf0" strokeWidth="1.5" />
          <path d="M609 250l16 10M657 262l8 9M943 528l8 14M1011 553l20 17" stroke="#f0f" strokeWidth="2.2" />
          <path d="M625 258l17 11M889 504l18-1M950 551l10 11 10-1M1033 567l10 8M941 522l9 7-2 6M941 522v9l6 6M1071 688h7M1135 953l9-4M667 284l6 8M1108 851h7" stroke="#ee6688" strokeWidth="1.3" />
          <path d="M627 258v3M1070 664l11-1M1070 666l-3 3 3 3M1062 620l3 2M979 547v3M1120 766l4 1M1109 852l1 3M1116 891l3 2M1156 992l3 2M1077 687l2 3" stroke="#222" strokeWidth="1.3" />
          <path d="M1160 1003l17 44 9 23" stroke="#b000a0" strokeWidth="1.5" />
          <path d="M1158 1000l10 25M1135 796v14M1079 684v8" stroke="#f0f" strokeWidth="2.5" />
          <path d="M1130 800h5v5h-5zM1062 630v6h4M1183 1070h7" stroke="#ff3cf0" strokeWidth="1.3" />
          <path d="M1129 807h4l4 5M1161 1004l8 2" stroke="#f02020" strokeWidth="1.5" />
          <path d="M1167 1001h3" stroke="#18a018" strokeWidth="2" />
          <path d="M1185 1067l2 4" stroke="#50b0f0" strokeWidth="2" />
          <path d="M729 374l4 8M738 386l7 3M1003 546l7 5M1115 763l13 9" stroke="#998880" strokeWidth="1.5" />
        </g>
      </svg>
    </div>
  );
}

function MessageBar() {
  return (
    <div role="alert" className="flex h-[28px] items-center border-y border-[#e0ae00] bg-[#ffc800] pr-[22px] pl-[10px]">
      <svg viewBox="0 0 22 20" className="mr-[10px] h-5 w-[22px]">
        <path d="M11 1L21 19.3H1z" fill="#ffc000" stroke="#dc6414" strokeWidth="1.5" strokeLinejoin="round" />
        <path d="M11 6v7M11 15v2.5" stroke="#8a3a0a" strokeWidth="2.6" />
      </svg>
      <p><span className="font-['Liberation_Mono',monospace] text-[10px]">Open Sans </span>字体安装失败</p>
      <div className="mr-[6px] ml-auto flex flex-col gap-[2px]">
        <button aria-label="上一条" className="h-[9px] w-[14px] border border-t-white border-r-[#806400] border-b-[#806400] border-l-white" />
        <button aria-label="下一条" className="h-[9px] w-[14px] border border-t-white border-r-[#806400] border-b-[#806400] border-l-white" />
      </div>
      <button className="h-5 w-20 rounded-[3px] border border-[#b4b4b4] bg-linear-to-b from-white to-[#f0f0f0]">查看错误</button>
      <button aria-label="关闭消息" className="ml-[31px]">
        <svg viewBox="0 0 18 18" className="size-[18px]"><circle cx="9" cy="9" r="8.7" fill="#3c3208" /><path d="M5.5 5.5l7 7M12.5 5.5l-7 7" stroke="#fff" strokeWidth="2.5" /></svg>
      </button>
    </div>
  );
}

function SpinBox({ id, label, value }: { id: string; label: string; value: string }) {
  return (
    <>
      <label htmlFor={id}>{label}</label>
      <span className="flex h-[21px] w-[89px] rounded-[3px] border border-[#b0b0b0] bg-white">
        <input id={id} defaultValue={value} className="w-full min-w-0 px-1 font-['Liberation_Mono',monospace] text-[10px] outline-none" />
        <span className="flex w-[15px] shrink-0 flex-col items-center justify-center gap-[3px] border-l border-[#c4c4c4]">
          <button aria-label={`增大${label}`} className="flex"><Caret className="rotate-180" /></button>
          <button aria-label={`减小${label}`} className="flex"><Caret /></button>
        </span>
      </span>
    </>
  );
}

function StatusBar() {
  return (
    <footer className="flex h-[29px] items-center border-t border-[#b4b4b4] pr-2 pl-1">
      <label className="mr-auto flex h-[22px] w-[200px] items-center gap-[7px] rounded-[3px] border border-[#b0b0b0] bg-white pl-2">
        <svg viewBox="0 0 14 14" className="size-[14px]" fill="none" stroke="#777" strokeWidth="1.3"><circle cx="5.5" cy="5.5" r="4" /><path d="M8.5 8.5l5 5" /></svg>
        <input aria-label="搜索" placeholder="搜索 (Ctrl+K)" className="w-full font-['Liberation_Mono','Noto_Sans_CJK_SC',monospace] text-[11px] outline-none placeholder:text-[#777]" />
      </label>
      <label htmlFor="coords">坐标</label>
      <input id="coords" defaultValue="77° , -72°" className="mr-[5px] h-[21px] w-[84px] rounded-[3px] border border-[#b0b0b0] bg-white text-center font-['Liberation_Mono',monospace] text-[10px]" />
      <button aria-label="切换范围显示" className="mr-[14px]">
        <svg viewBox="0 0 16 16" className="size-[15px]" fill="none" stroke="#444" strokeWidth="1.5"><ellipse cx="5" cy="5" rx="2" ry="4" transform="rotate(-35 5 5)" /><ellipse cx="10" cy="11" rx="3" ry="4.5" transform="rotate(-35 10 11)" fill="#999" /><path d="M2 8l6 6M8 7l6-6M11 9l4-4" /></svg>
      </button>
      <label htmlFor="scale">比例</label>
      <span className="relative mr-[13px] ml-px flex">
        <select id="scale" className="h-[21px] w-[82px] appearance-none rounded-[3px] border border-[#b0b0b0] bg-white pl-[3px] font-['Liberation_Mono',monospace] text-[10px]">
          <option>1:907622</option>
        </select>
        <span className="pointer-events-none absolute inset-y-0 right-0 flex w-5 items-center justify-center border-l border-[#c4c4c4]"><Caret /></span>
      </span>
      <button aria-label="锁定比例" className="mr-[9px]">
        <svg viewBox="0 0 12 15" className="h-[15px] w-3"><path d="M3 7V4a3 3 0 0 1 6 0v3" fill="none" stroke="#888" strokeWidth="1.6" /><rect y="6.5" width="12" height="8.5" rx="1" fill="#555" /></svg>
      </button>
      <div className="flex items-center"><SpinBox id="magnifier" label="放大镜" value="100%" /></div>
      <div className="mr-[7px] ml-[10px] flex items-center gap-x-[3px]"><SpinBox id="rotation" label="旋转角度" value="0.0°" /></div>
      <CheckBox id="render" />
      <label htmlFor="render" className="ml-[5px]">渲染</label>
      <button className="mr-[29px] ml-[14px] flex items-center gap-[2px] font-['Liberation_Mono',monospace] text-[10px]">
        <svg viewBox="0 0 22 22" className="size-[15px]"><circle cx="11" cy="11" r="10" fill="#666" /><path d="M11 1v20M1 11h20M3 5h16M3 17h16M11 1C4 6 4 16 11 21M11 1c7 5 7 15 0 20" stroke="#ddd" fill="none" /></svg>
        EPSG:4326
      </button>
      <button aria-label="消息">
        <svg viewBox="0 0 16 16" className="size-4"><path d="M8 1c9 0 9 9 6 10.5l1 3.5-4-2C0 14.5-3 1 8 1z" fill="#555" /><path d="M3.5 7h2M7 7h2M10.5 7h2" stroke="#fff" strokeWidth="2" /></svg>
      </button>
    </footer>
  );
}

export default function App() {
  return (
    <div className="relative flex h-screen flex-col overflow-hidden bg-[#efefef] font-['Noto_Sans','Noto_Sans_CJK_SC',sans-serif] text-xs text-black">
      <TitleBar />
      <nav className="flex h-[22px] items-stretch gap-[7px] border-b border-[#d4d4d4] pl-2">
        {menus.map(([name, key]) => (
          <div key={name} className="relative flex">
            <button className={`px-1 ${key === "S" ? "bg-[#0078d7] text-white" : ""}`}>{name}(<u>{key}</u>)</button>
            {key === "S" && <SettingsMenu />}
          </div>
        ))}
      </nav>

      <Toolbar label="工程与导航">
        <Tools items={[
          { icon: "newProject", label: "新建工程" }, { icon: "open", label: "打开工程" }, { icon: "save", label: "保存工程" },
          { icon: "newLayout", label: "新建打印布局" }, { icon: "layoutManager", label: "布局管理器" }, { icon: "styleManager", label: "样式管理器" },
        ]} />
        <Handle />
        <span className="w-[165px]" />
        <Tools items={[
          { icon: "zoomSelection", label: "缩放到选中" }, { icon: "zoomLayer", label: "缩放到图层" }, { icon: "zoomNative", label: "原始分辨率", off: true },
          { icon: "zoomLast", label: "上一视图" }, { icon: "zoomNext", label: "下一视图", off: true }, { icon: "newMap", label: "新建地图视图" },
          { icon: "new3d", label: "新建3D视图" }, { icon: "newBookmark", label: "新建书签" }, { icon: "bookmarks", label: "显示书签" },
          { icon: "clock", label: "时态控制器" }, { icon: "refresh", label: "刷新" },
        ]} />
        <Handle />
        <Tools items={[
          { icon: "identify", label: "识别要素" }, { icon: "abacus", label: "字段计算器" }, { icon: "gear", label: "处理工具箱" },
          { icon: "sigma", label: "统计汇总" }, { icon: "table", label: "属性表", menu: true }, { icon: "measure", label: "测量", menu: true },
          { icon: "mapTips", label: "地图提示" }, { icon: "action", label: "运行动作", menu: true, off: true },
        ]} />
      </Toolbar>

      <Toolbar label="数据源与数字化">
        <Tools items={[
          { icon: "addSource", label: "数据源管理器" }, { icon: "geopackage", label: "新建GeoPackage" }, { icon: "newShapefile", label: "新建Shapefile" },
          { icon: "spatialite", label: "新建SpatiaLite" }, { icon: "tempLayer", label: "新建临时图层" }, { icon: "meshLayer", label: "新建网孔图层" },
        ]} />
        <Handle />
        <span className="w-[132px]" />
        <Tools items={[
          { icon: "copy", label: "保存编辑", menu: true, off: true }, { icon: "addFeature", label: "添加要素", off: true },
          { icon: "vertexTool", label: "节点工具", menu: true, off: true }, { icon: "modify", label: "修改属性", off: true },
          { icon: "trash", label: "删除选中", off: true }, { icon: "cut", label: "剪切", off: true }, { icon: "copy", label: "复制", off: true },
          { icon: "paste", label: "粘贴", off: true }, { icon: "undo", label: "撤销", off: true }, { icon: "redo", label: "重做", off: true },
        ]} />
        <Handle />
        <Tools items={[{ icon: "tagYellow", label: "图层标注选项" }, { icon: "diagram", label: "图层图表选项" }]} />
        <Separator />
        <Tools items={[{ icon: "tagPin", label: "高亮固定标注" }, { icon: "tagRed", label: "切换未放置标注" }]} />
        <Separator />
        <Tools items={[
          { icon: "tagPinGray", label: "固定标注", off: true }, { icon: "tagEye", label: "显示标注", off: true }, { icon: "tagMove", label: "移动标注", off: true },
          { icon: "tagRotate", label: "旋转标注", off: true }, { icon: "tagEdit", label: "更改标注", off: true },
        ]} />
        <Handle />
        <Tools items={[{ icon: "globeAdd", label: "添加底图" }, { icon: "globeSearch", label: "搜索底图" }, { icon: "globeFind", label: "元搜索" }]} />
        <Handle />
        <Tools items={[{ icon: "python", label: "Python控制台" }]} />
        <Handle />
        <Tools items={[{ icon: "help", label: "帮助内容" }]} />
        <Handle />
      </Toolbar>

      <Toolbar label="栅格">
        <Tools items={[
          { icon: "histogram", label: "局部累积拉伸", off: true }, { icon: "histogramStretch", label: "全局累积拉伸", off: true },
          { icon: "histogram", label: "局部直方图拉伸", off: true }, { icon: "histogramStretch", label: "全局直方图拉伸", off: true },
          { icon: "sunUp", label: "增加亮度", off: true }, { icon: "sunDown", label: "降低亮度", off: true },
        ]} />
      </Toolbar>

      <Toolbar label="选择与注记" className="h-[38px]">
        <Tools items={[
          { icon: "select", label: "选择要素", menu: true }, { icon: "selectValue", label: "按值选择", menu: true },
          { icon: "deselect", label: "取消选择", menu: true }, { icon: "selectLocation", label: "按位置选择", menu: true },
        ]} />
        <Handle />
        <span className="w-[173px]" />
        <Tools items={[
          { icon: "textLine", label: "新建注记图层", menu: true }, { icon: "annotSelect", label: "修改注记" }, { icon: "annotPolygon", label: "面注记" },
          { icon: "annotLine", label: "线注记" }, { icon: "annotMarker", label: "标记注记" }, { icon: "annotText", label: "文本注记" },
          { icon: "annotTextLine", label: "沿线文本注记" },
        ]} />
        <Separator />
        <Tools items={[{ icon: "textBox", label: "文本框注记", menu: true }]} />
        <Handle />
        <Tools items={[{ icon: "snap", label: "启用捕捉" }, { icon: "target", label: "高级数字化", off: true }]} />
        <Separator />
        <Tools items={[
          { icon: "targetBox", label: "捕捉模式" }, { icon: "targetAdd", label: "交点捕捉", off: true },
          { icon: "vectorNew", label: "拓扑编辑" }, { icon: "traceOff", label: "启用追踪", off: true },
        ]} />
        <Separator />
        <Tools items={[{ icon: "info", label: "关于" }, { icon: "wrench", label: "设置" }]} />
      </Toolbar>

      <main className="flex min-h-0 flex-1">
        <aside className="flex w-[293px] shrink-0 flex-col">
          <BrowserPanel />
          <div className="flex h-[5px] items-center justify-center">
            <span className="h-px w-4 border-t border-dotted border-[#999]" />
          </div>
          <LayersPanel />
        </aside>
        <div className="flex w-[6px] shrink-0 items-center justify-center">
          <span className="h-4 border-l border-dotted border-[#999]" />
        </div>
        <section className="flex min-w-0 flex-1 flex-col border-x border-[#b4b4b4] pt-px">
          <MessageBar />
          <MapCanvas />
        </section>
      </main>
      <StatusBar />

      <p className="pointer-events-none absolute right-[5px] bottom-[11px] font-['Liberation_Sans',sans-serif] text-[37px] leading-[40px] text-[#dcdcdc]/80 [text-shadow:1px_1px_1px_#8a8a8a]">
        CSDN @weixin_42083084
      </p>
    </div>
  );
}
